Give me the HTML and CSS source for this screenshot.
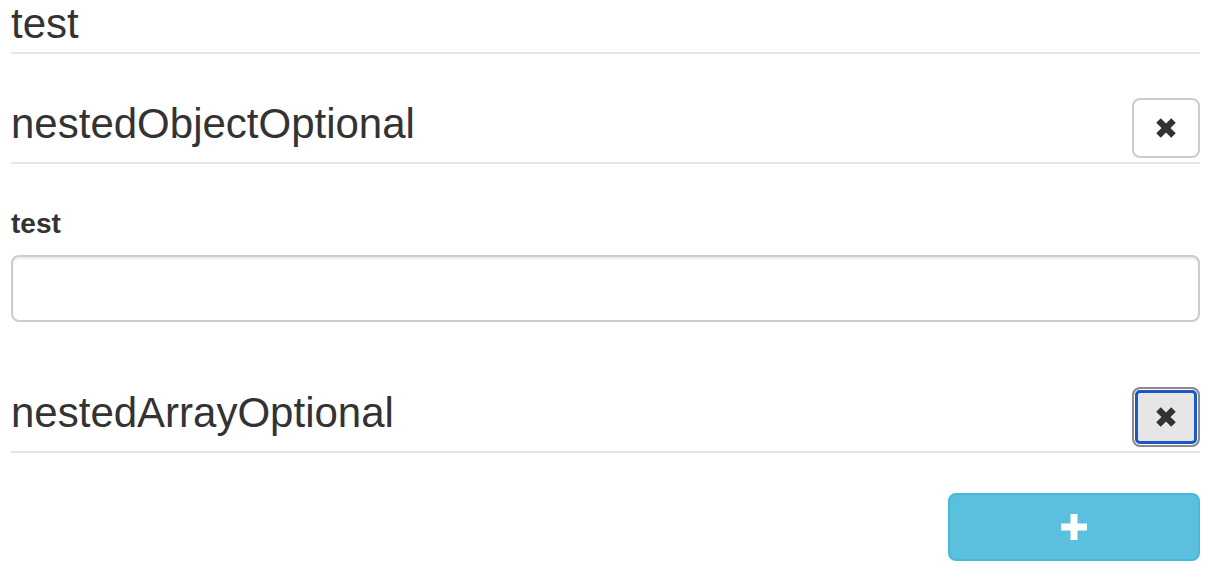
FILE: index.html
```html
<!DOCTYPE html>
<html lang="en">
<head>
<meta charset="utf-8">
<title>Form</title>
<link rel="stylesheet" href="styles.css">
</head>
<body>
<main class="form">
  <div class="legend">test</div>

  <div class="section-head first">
    <div class="section-title">nestedObjectOptional</div>
    <button class="btn-remove" type="button" aria-label="Remove">
      <svg width="22" height="22" viewBox="0 0 22 22"><path d="M3.5 3.5 L18.5 18.5 M18.5 3.5 L3.5 18.5" stroke="#333" stroke-width="6.4" stroke-linecap="butt" fill="none"/></svg>
    </button>
  </div>

  <div class="field">
    <label class="field-label" for="t">test</label>
    <input class="field-input" id="t" type="text">
  </div>

  <div class="section-head second">
    <div class="section-title">nestedArrayOptional</div>
    <button class="btn-remove focused" type="button" aria-label="Remove">
      <svg width="22" height="22" viewBox="0 0 22 22"><path d="M3.5 3.5 L18.5 18.5 M18.5 3.5 L3.5 18.5" stroke="#333" stroke-width="6.4" stroke-linecap="butt" fill="none"/></svg>
    </button>
  </div>

  <div class="add-row">
    <button class="btn-add" type="button" aria-label="Add">
      <svg width="26" height="26" viewBox="0 0 26 26"><path d="M13 0 V26 M0 13 H26" stroke="#fff" stroke-width="7" fill="none"/></svg>
    </button>
  </div>
</main>
</body>
</html>
```
FILE: styles.css
```css
html, body {
  margin: 0;
  padding: 0;
  background: #fff;
}
body {
  font-family: "Liberation Sans", Arial, sans-serif;
  color: #333;
}
.form {
  margin-top: -8px;
  padding: 0 20px 0 11px;
}
.legend {
  font-size: 42px;
  line-height: 60px;
  padding-top: 2px;
  height: 58px;
  overflow: hidden;
  border-bottom: 2px solid #e5e5e5;
  margin-bottom: 44px;
}
.section-head {
  display: flex;
  justify-content: space-between;
  align-items: flex-start;
  padding-bottom: 4px;
  border-bottom: 2px solid #e5e5e5;
}
.section-head.first {
  margin-bottom: 40px;
}
.section-head.second {
  margin-top: 65px;
}
.section-title {
  font-size: 42px;
  line-height: 48px;
  padding-top: 2px;
}
.btn-remove {
  width: 68px;
  height: 60px;
  box-sizing: border-box;
  border: 2px solid #ccc;
  border-radius: 8px;
  background: #fff;
  display: flex;
  align-items: center;
  justify-content: center;
  padding: 0;
  margin: 0;
}
.btn-remove.focused {
  background: #e6e6e6;
  border-color: #8c8c8c;
  box-shadow: inset 0 0 0 1px #fff, inset 0 0 0 4px #1b57c8;
}
.field-label {
  display: block;
  font-size: 28px;
  font-weight: bold;
  line-height: 40px;
  margin-bottom: 11px;
}
.field-input {
  display: block;
  width: 100%;
  height: 67px;
  box-sizing: border-box;
  border: 2px solid #ccc;
  border-radius: 8px;
  box-shadow: inset 0 2px 2px rgba(0,0,0,0.075);
  margin: 0;
  padding: 0 24px;
  font-size: 28px;
  font-family: inherit;
  background: #fff;
}
.add-row {
  display: flex;
  justify-content: flex-end;
  margin-top: 40px;
}
.btn-add {
  width: 252px;
  height: 68px;
  box-sizing: border-box;
  background: #5bc0de;
  border: 2px solid #46b8da;
  border-radius: 8px;
  display: flex;
  align-items: center;
  justify-content: center;
  padding: 0;
  margin: 0;
}
```
